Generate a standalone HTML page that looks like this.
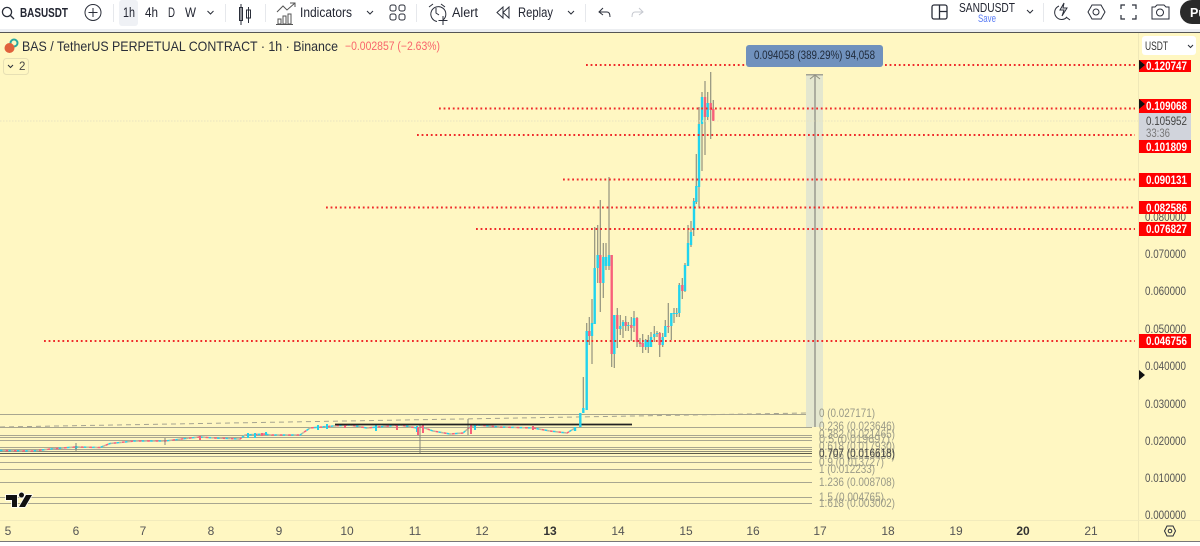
<!DOCTYPE html>
<html><head><meta charset="utf-8"><style>
html,body{margin:0;padding:0;width:1200px;height:546px;overflow:hidden;background:#fff}
svg{display:block;filter:blur(.3px)}
text{font-family:"Liberation Sans",sans-serif;font-size:11.5px;fill:#333;}
.tb{font-size:13.5px;fill:#232632}
.p{font-size:12px;fill:#555}
.w{font-size:12px;fill:#fff;font-weight:bold}
.f{font-size:12px;fill:#9a9a88}
.t{font-size:12px;fill:#555;text-anchor:middle}
.i{fill:none;stroke:#2a2e39;stroke-width:1}
</style></head><body>
<svg width="1200" height="546" viewBox="0 0 1200 546" xmlns="http://www.w3.org/2000/svg">
<rect width="1200" height="546" fill="#fff"/>
<rect x="0" y="29" width="1200" height="3" fill="#eceef1"/>
<rect x="0" y="32" width="1200" height="1" fill="#555"/>
<rect x="0" y="33" width="1200" height="508" fill="#fff7c2"/>
<rect x="0" y="541" width="1200" height="1" fill="#777"/>
<rect x="1138" y="33" width="1" height="508" fill="#efe8b8"/>
<rect x="0" y="520" width="1200" height="1" fill="#f2ebbc"/>

<!-- toolbar -->
<circle cx="7" cy="12" r="4.6" class="i" style="stroke-width:1.3"/><path d="M10.5 15.5L14 19" class="i" style="stroke-width:1.3"/>
<text class="tb" x="20" y="17" textLength="48" lengthAdjust="spacingAndGlyphs" style="font-weight:bold;font-size:13px">BASUSDT</text>
<circle cx="93" cy="12.5" r="8" class="i"/><path d="M93 8v9M88.500 12.500h9" class="i"/>
<rect x="113" y="4" width="1" height="18" fill="#e6e8ec"/>
<rect x="119" y="0" width="19" height="26" rx="3" fill="#eff1f5"/>
<text class="tb" x="123" y="17" textLength="12" lengthAdjust="spacingAndGlyphs">1h</text>
<text class="tb" x="145" y="17" textLength="13" lengthAdjust="spacingAndGlyphs">4h</text>
<text class="tb" x="168" y="17" textLength="7" lengthAdjust="spacingAndGlyphs">D</text>
<text class="tb" x="185" y="17" textLength="11" lengthAdjust="spacingAndGlyphs">W</text>
<path d="M207.500 11l3 3 3-3" class="i"/>
<rect x="225" y="4" width="1" height="18" fill="#e6e8ec"/>
<path d="M241 4v21M239.500 7.500h3v13h-3zM248.500 7v16M246.500 10h4v8h-4z" class="i" fill="none"/>
<rect x="265" y="4" width="1" height="18" fill="#e6e8ec"/>
<path d="M277 12l6-6 4 4 8-7M290 3h5v4M278 24v-5h3v5zM283 24v-8h3v8zM288 24v-10h3v10zM276 24.500h17" class="i" style="stroke:#555"/>
<text class="tb" x="300" y="17" textLength="52" lengthAdjust="spacingAndGlyphs">Indicators</text>
<path d="M367 11l3 3 3-3" class="i"/>
<rect x="390" y="5" width="6" height="6" rx="2" class="i"/><rect x="399" y="5" width="6" height="6" rx="2" class="i"/><rect x="390" y="14" width="6" height="6" rx="2" class="i"/><rect x="399" y="14" width="6" height="6" rx="2" class="i"/>
<rect x="416" y="4" width="1" height="18" fill="#e6e8ec"/>
<path d="M443 20a7.500 7.500 0 1 0-6 1.500M436 8v5l3 2M429 7l4-3M441 4l4 3M443 16v9M438.500 20.500h9" class="i"/>
<text class="tb" x="452" y="17" textLength="26" lengthAdjust="spacingAndGlyphs">Alert</text>
<path d="M503 7l-6 5.500 6 5.500zM509 7l-6 5.500 6 5.500z" class="i"/>
<text class="tb" x="518" y="17" textLength="35" lengthAdjust="spacingAndGlyphs">Replay</text>
<path d="M568 11l3 3 3-3" class="i"/>
<rect x="585" y="4" width="1" height="18" fill="#e6e8ec"/>
<path d="M603 8l-4 4 4 3M599 12h8q3 0 3 5" class="i"/>
<path d="M639 8l4 4-4 3M643 12h-8q-3 0-3 5" class="i" style="stroke:#c5c8cf"/>

<rect x="932" y="5" width="15" height="14" rx="2" class="i" style="stroke-width:1.3"/><path d="M939.500 5v14M939.500 11.500h7.500" class="i" style="stroke-width:1.3"/>
<text class="tb" x="959" y="12" textLength="56" lengthAdjust="spacingAndGlyphs" style="font-size:13px">SANDUSDT</text>
<text x="978" y="22" textLength="18" lengthAdjust="spacingAndGlyphs" style="font-size:11px;fill:#5b7df5">Save</text>
<path d="M1027 10l3 3 3-3" class="i"/>
<rect x="1043" y="3" width="1" height="19" fill="#e6e8ec"/>
<path d="M1059 6a7 7 0 1 0 8 11M1066 17l4 3M1064 3l-4 7h4l-2 6 5-8h-4z" class="i"/>
<path d="M1088 12l4-7h9l4 7-4 7h-9z" class="i"/><circle cx="1096" cy="12" r="3" class="i"/>
<path d="M1121 9V5h4M1132 5h4v4M1136 15v4h-4M1125 19h-4v-4" class="i" style="stroke-width:1.2"/>
<path d="M1152 7h3l2-2h7l2 2h3v12h-17z" class="i"/><circle cx="1160" cy="12.500" r="3.500" class="i"/>
<rect x="1180" y="0" width="40" height="24" rx="12" fill="#2a2a2a"/>
<text x="1190" y="17" style="font-size:12.5px;fill:#fff;font-weight:bold">Pu</text>

<!-- legend -->
<circle cx="14" cy="43" r="3.500" fill="none" stroke="#2aa7a0" stroke-width="2"/>
<circle cx="9.500" cy="48" r="5" fill="#e0613c"/>
<text x="22" y="51" textLength="316" lengthAdjust="spacingAndGlyphs" style="font-size:14px;fill:#2a2e39">BAS / TetherUS PERPETUAL CONTRACT · 1h · Binance</text>
<text x="345" y="50" textLength="95" lengthAdjust="spacingAndGlyphs" style="font-size:11.5px;fill:#f8646c">−0.002857 (−2.63%)</text>
<rect x="3.500" y="58.500" width="25" height="16" rx="3" fill="#fff7c2" stroke="#e7e0b4"/>
<path d="M8 65l2.500 2.500L13 65" class="i"/><text x="19" y="70" style="font-size:11.500px;fill:#444">2</text>

<!-- fib lines -->
<g stroke="#a8a690" stroke-width="1" fill="none">
<path d="M0 414.500H812M0 427.500H812M0 435.500H812M0 437.500H812M0 440.500H812M0 447.500H812M0 449.500H812M0 456.500H812M0 462.500H812M0 469.500H812M0 482.500H812M0 497.500H812M0 503.500H812"/>
</g>
<path d="M0 451.500H812" stroke="#8f8d78"/><path d="M0 453.500H812" stroke="#5c5a4a"/>
<path d="M0 427L806 413" stroke="#a5a390" stroke-dasharray="5 4" fill="none"/>

<!-- low candles -->
<g fill="none" stroke-width="1.500">
<path d="M0 450.500L33 451L50 449L75 447L100 447.500L110 443.500L135 441L165 441L190 438L200 437L215 438L240 439L245 435L265 434L270 435L300 435L310 428L333 426L350 425L367 428L400 425L417 428L422 427L433 431L450 434L463 433L470 427L477 425L500 427L533 428L550 431L567 433L575 428" stroke="#21d3ee" stroke-dasharray="2.800 5.600"/>
<path d="M0 450.500L33 451L50 449L75 447L100 447.500L110 443.500L135 441L165 441L190 438L200 437L215 438L240 439L245 435L265 434L270 435L300 435L310 428L333 426L350 425L367 428L400 425L417 428L422 427L433 431L450 434L463 433L470 427L477 425L500 427L533 428L550 431L567 433L575 428" stroke="#f8607a" stroke-dasharray="2.800 5.600" stroke-dashoffset="3"/>
<path d="M0 450.500L33 451L50 449L75 447L100 447.500L110 443.500L135 441L165 441L190 438L200 437L215 438L240 439L245 435L265 434L270 435L300 435L310 428L333 426L350 425L367 428L400 425L417 428L422 427L433 431L450 434L463 433L470 427L477 425L500 427L533 428L550 431L567 433L575 428" stroke="#b9b79c" stroke-dasharray="2.800 5.600" stroke-dashoffset="6"/>
<path d="M76 446V449M248 433V438M255 433V438M266 432V435M318 425V430M327 424V429M376 425V431M417 426V432M475 424V430" stroke="#21d3ee" stroke-width="2"/>
<path d="M200 436V440M262 433V436M345 424V428M397 425V430M418 427V435M423 425V433M471 425V434M533 426V430" stroke="#f8607a" stroke-width="2"/>
</g>
<path d="M420 424V453M468 419V435M76 443V451M165 438V445" stroke="#85857a" stroke-width="1" fill="none"/>
<path d="M335 424.500H632" stroke="#222" stroke-width="1.800"/>

<!-- wicks -->
<path fill="none" stroke="#92927e" stroke-width="1.200" d="M583.300 377V413M586.700 323V410M589.300 317V345M592 299V364M594.700 227V324M597.700 225V283M600.300 200V312M603.300 243V298M606 243V270M609 177V270M611.700 255V367M614.300 315V368M617.300 308V348M620.300 315V335M623 320V338M625.700 316V331M628.300 322V331M631.300 317V341M634 311V332M637 317V347M640 338V347M642.700 334V353M645.700 339V350M648.300 335V353M651 332V347M654.300 326V342M657 331V337M659.700 332V357M662.700 333V347M665.300 320V337M668.300 303V333M671.300 313V340M674 308V323M676.700 308V317M679.300 283V317M682.300 278V299M685 263V292M688 225V266M691 221V247M693.700 198V236M696.300 154V204M699 107V207M702 92V171M705 81V155M707.700 92V120M710.700 72V139M713.300 100V121"/>
<!-- cyan bodies -->
<path fill="none" stroke="#21d3ee" stroke-width="2.400" d="M575 427V431M580.300 413V427M583.300 408V413M586.700 331V410M592 323V336M594.700 268V324M597.700 255V268M603.300 257V283M606 257V266M609 255V266M614.300 315V354M620.300 326V329M623 322V326M628.300 325V326M634 318V326M645.700 340V347M648.300 340V347M651 337V347M654.300 334V337M657 333V334M662.700 337V345M665.300 326V337M671.300 313V326M674 313V314M676.700 313V314M679.300 285V313M685 265V291M688 243V266M691 232V245M694 201V230M696.300 186V202M699 124V187M702 97V124M707.700 103V117"/>
<!-- red bodies -->
<path fill="none" stroke="#f8607a" stroke-width="2.400" d="M589.300 331V336M600.300 255V283M611.700 255V354M617.300 315V329M625.700 322V326M631.300 325V328M637 318V342M640 342V344M642.700 343V347M659.700 333V345M668.300 326V327M682.300 285V291M705 97V117M710.700 103V110M713.300 109V121"/>

<!-- ruler band -->
<rect x="806" y="74" width="17" height="353" fill="#e4e7cf"/>
<rect x="806" y="74" width="17" height="1.500" fill="#a3a394"/>
<path d="M815 75V427" stroke="#a5a79a" stroke-width="1.800" fill="none"/>
<path d="M810 79l5-4 5 4" stroke="#90907f" fill="none"/>

<!-- level lines -->
<g stroke="#ef2b2b" stroke-width="2" stroke-dasharray="1.800 2.800" fill="none">
<path d="M586 65H1135M439 108.500H1135M417 135H1135M563 179.500H1135M326 207.500H1135M476 229H1135M44 341H1135"/>
</g>
<path d="M0 121H1138" stroke="#e8e3c0" stroke-dasharray="1.500 1.500" fill="none"/>

<!-- ruler tooltip -->
<rect x="746" y="45" width="137" height="22" rx="3" fill="#7091bd"/>
<text x="754" y="59" textLength="121" lengthAdjust="spacingAndGlyphs" style="font-size:12px;fill:#1f2a3a">0.094058 (389.29%) 94,058</text>

<!-- fib labels -->
<text class="f" x="819" y="417" textLength="56" lengthAdjust="spacingAndGlyphs">0 (0.027171)</text>
<text class="f" x="819" y="430" textLength="76" lengthAdjust="spacingAndGlyphs">0.236 (0.023646)</text>
<text class="f" x="819" y="438" textLength="76" lengthAdjust="spacingAndGlyphs">0.382 (0.021465)</text>
<text class="f" x="819" y="443" textLength="71" lengthAdjust="spacingAndGlyphs">0.5 (0.019697)</text>
<text class="f" x="819" y="450" textLength="76" lengthAdjust="spacingAndGlyphs">0.618 (0.017930)</text>
<text class="f" x="819" y="459" textLength="76" lengthAdjust="spacingAndGlyphs">0.786 (0.015430)</text>
<text class="f" x="819" y="466" textLength="65" lengthAdjust="spacingAndGlyphs">0.9 (0.013727)</text>
<text class="f" x="819" y="473" textLength="56" lengthAdjust="spacingAndGlyphs">1 (0.012233)</text>
<text class="f" x="819" y="486" textLength="76" lengthAdjust="spacingAndGlyphs">1.236 (0.008708)</text>
<text class="f" x="819" y="501" textLength="65" lengthAdjust="spacingAndGlyphs">1.5 (0.004765)</text>
<text class="f" x="819" y="507" textLength="76" lengthAdjust="spacingAndGlyphs">1.618 (0.003002)</text>
<text class="f" x="819" y="457" textLength="76" lengthAdjust="spacingAndGlyphs" style="fill:#444">0.707 (0.016618)</text>

<!-- logo -->
<path d="M6 495H17V507H12V500H6zM19 495a2.500 2.500 0 1 1 0 .1zM26 495H32L25 507H19z" fill="#111" stroke="#fff" stroke-width="1.500" paint-order="stroke"/>

<!-- price axis -->
<rect x="1142" y="36" width="54" height="19" rx="3" fill="#fff"/>
<text x="1145" y="50" textLength="23" lengthAdjust="spacingAndGlyphs" style="font-size:12px;fill:#333">USDT</text>
<path d="M1188 45l2.500 2.500 2.500-2.500" class="i"/>
<g>
<text class="p" x="1145" y="221" textLength="41" lengthAdjust="spacingAndGlyphs">0.080000</text>
<text class="p" x="1145" y="258" textLength="41" lengthAdjust="spacingAndGlyphs">0.070000</text>
<text class="p" x="1145" y="295" textLength="41" lengthAdjust="spacingAndGlyphs">0.060000</text>
<text class="p" x="1145" y="333" textLength="41" lengthAdjust="spacingAndGlyphs">0.050000</text>
<text class="p" x="1145" y="370" textLength="41" lengthAdjust="spacingAndGlyphs">0.040000</text>
<text class="p" x="1145" y="408" textLength="41" lengthAdjust="spacingAndGlyphs">0.030000</text>
<text class="p" x="1145" y="445" textLength="41" lengthAdjust="spacingAndGlyphs">0.020000</text>
<text class="p" x="1145" y="482" textLength="41" lengthAdjust="spacingAndGlyphs">0.010000</text>
<text class="p" x="1145" y="519" textLength="41" lengthAdjust="spacingAndGlyphs">0.000000</text>
</g>
<rect x="1139" y="113" width="52" height="27" fill="#d1d4dc"/>
<text class="p" x="1146" y="125" textLength="41" lengthAdjust="spacingAndGlyphs" style="fill:#444">0.105952</text>
<text class="p" x="1146" y="137" textLength="24" lengthAdjust="spacingAndGlyphs" style="fill:#777">33:36</text>
<g fill="#ff0000">
<rect x="1139" y="60" width="52" height="12"/><rect x="1139" y="99" width="52" height="14"/><rect x="1139" y="140" width="52" height="13"/><rect x="1139" y="173" width="52" height="14"/><rect x="1139" y="201" width="52" height="13"/><rect x="1139" y="222" width="52" height="14"/><rect x="1139" y="334" width="52" height="14"/>
</g>
<g>
<text class="w" x="1146" y="70" textLength="41" lengthAdjust="spacingAndGlyphs">0.120747</text>
<text class="w" x="1146" y="110" textLength="41" lengthAdjust="spacingAndGlyphs">0.109068</text>
<text class="w" x="1146" y="151" textLength="41" lengthAdjust="spacingAndGlyphs">0.101809</text>
<text class="w" x="1146" y="184" textLength="41" lengthAdjust="spacingAndGlyphs">0.090131</text>
<text class="w" x="1146" y="212" textLength="41" lengthAdjust="spacingAndGlyphs">0.082586</text>
<text class="w" x="1146" y="233" textLength="41" lengthAdjust="spacingAndGlyphs">0.076827</text>
<text class="w" x="1146" y="345" textLength="41" lengthAdjust="spacingAndGlyphs">0.046756</text>
</g>
<path d="M1139 60l6 5-6 5zM1139 99l6 5-6 5zM1139 370l6 5-6 5z" fill="#111"/>

<!-- time axis -->
<text class="t" x="8" y="535">5</text><text class="t" x="76" y="535">6</text><text class="t" x="143" y="535">7</text><text class="t" x="211" y="535">8</text><text class="t" x="279" y="535">9</text><text class="t" x="347" y="535">10</text><text class="t" x="415" y="535">11</text><text class="t" x="482" y="535">12</text><text class="t" x="550" y="535" style="font-weight:bold;fill:#333">13</text><text class="t" x="618" y="535">14</text><text class="t" x="686" y="535">15</text><text class="t" x="753" y="535">16</text><text class="t" x="820" y="535">17</text><text class="t" x="888" y="535">18</text><text class="t" x="956" y="535">19</text><text class="t" x="1023" y="535" style="font-weight:bold;fill:#333">20</text><text class="t" x="1091" y="535">21</text>
<path d="M1164.500 531l2.500-5h6l2.500 5-2.500 5h-6z" class="i"/><circle cx="1170" cy="531" r="1.800" class="i"/>
</svg>
</body></html>
